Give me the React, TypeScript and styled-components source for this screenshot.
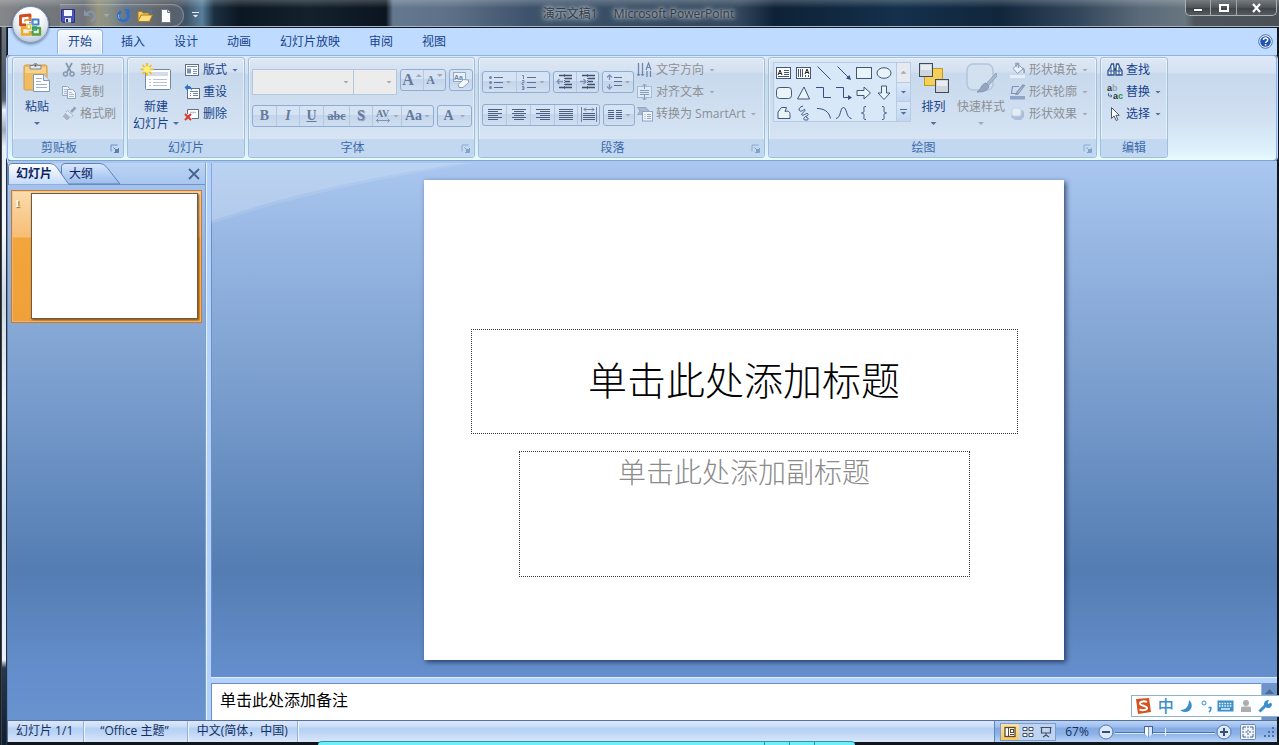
import React from 'react';
import styled, { createGlobalStyle, css } from 'styled-components';

const GlobalStyle = createGlobalStyle`
  *, *::before, *::after { box-sizing: border-box; }
  body { margin: 0; }
  body, button, input, select, textarea {
    font-family: "Open Sans", "Noto Sans CJK SC", sans-serif;
    font-size: 12px;
    line-height: 16px;
  }
  button { border: 0; padding: 0; background: none; color: inherit; cursor: default; white-space: nowrap; }
  svg { display: block; flex: none; }
`;

const ink = '#15428b';
const faded = '#8d8f93';

/* ---------- window frame ---------- */

const Frame = styled.div`
  position: relative;
  height: 100vh;
  min-height: 600px;
  display: flex;
  flex-direction: column;
  padding: 0 2px 3px 7px;
  overflow: hidden;
  background:
    linear-gradient(90deg, #1b1e24 0 1px, #3a3e46 1px 2px, transparent 2px 6px, #26303c 6px 7px, transparent 7px) left / 8px 100% no-repeat,
    linear-gradient(180deg, #7d8187 0, #4c5562 90px, #59626f 100px, #e9f1fb 110px, #9fa9b6 130px, #e9eef5 146px, #f4f7fd 230px, #cfd8e2 300px, #f1f6fd 400px, #d5e6fb 520px, #eaf2fd 660px, #26384d 668px, #0d1f30 100%) left / 8px 100% no-repeat,
    #11161d;
`;

const TitleBar = styled.header`
  display: grid;
  grid-template-columns: 1fr auto 1fr;
  align-items: start;
  height: 27px;
  flex: none;
  margin: 0 -2px 0 -7px;
  padding-right: 2px;
  border-bottom: 1px solid #a9b6c2;
  background:
    linear-gradient(180deg, rgba(255, 255, 255, 0.22) 0, rgba(255, 255, 255, 0) 8px),
    linear-gradient(90deg, #858789 0, #70757b 60px, #5f646b 84px, #8a8972 98px, #7c8578 108px, #5b6877 125px, #565b62 150px, #474e58 172px, #3f5466 186px, #587f9c 202px, #1c3040 214px, #0b1722 240px, #14212d 310px, #0a1520 386px, #64788f 393px, #5d7087 450px, #3d536b 530px, #31465c 740px, #0d2236 775px, #14304c 900px, #10263b 1000px, #34485d 1080px, #5a6a79 1140px, #68757f 1185px, #4d545b 1195px, #4a5056 100%);
`;

const QuickAccess = styled.div`
  display: flex;
  align-items: center;
  gap: 7px;
  height: 23px;
  margin-top: 4px;
  padding-left: 60px;
`;

const QuickPill = styled.div`
  display: flex;
  align-items: center;
  gap: 7px;
  height: 23px;
  width: 124px;
  border: 1px solid rgba(200, 210, 220, 0.35);
  border-left: 0;
  border-radius: 0 12px 12px 0;
  background: rgba(255, 255, 255, 0.1);
`;

const QuickButton = styled.button<{ $w?: number }>`
  width: ${(p) => p.$w ?? 16}px;
  height: 16px;
  display: flex;
  align-items: center;
  justify-content: center;
`;

const Title = styled.h1`
  margin: 5px 0 0;
  display: flex;
  gap: 16px;
  font-size: 12px;
  line-height: 18px;
  font-weight: 400;
  color: #343b43;
  text-shadow: 0 0 3px #a9b3bd, 0 0 5px #a9b3bd, 0 0 7px #9aa6b2, 0 0 9px #8d9aa8;
`;

const Controls = styled.div`
  justify-self: end;
  display: flex;
  height: 16px;
  border: 1px solid #aab0b6;
  border-top: 0;
  border-radius: 0 0 5px 5px;
  overflow: hidden;
  background: linear-gradient(180deg, #767b80, #4f5459 50%, #3e4348 52%, #565b60);
`;

const ControlButton = styled.button<{ $w: number }>`
  width: ${(p) => p.$w}px;
  display: flex;
  align-items: center;
  justify-content: center;
  & + & { border-left: 1px solid #a2a7ac; }
`;

const OfficeButton = styled.button`
  position: absolute;
  left: 12px;
  top: 6px;
  width: 37px;
  height: 37px;
  border-radius: 50%;
  display: flex;
  align-items: center;
  justify-content: center;
  border: 1px solid #7f93b2;
  background: radial-gradient(circle at 50% 25%, #ffffff 0 30%, #dfe5ee 60%, #b9c6da 85%, #f1f6fc 100%);
  box-shadow: 0 1px 3px rgba(20, 40, 80, 0.6);
`;

/* ---------- tabs ---------- */

const TabRow = styled.nav`
  flex: none;
  display: flex;
  align-items: flex-end;
  height: 28px;
  gap: 7px;
  padding: 0 4px 0 49px;
  border-top: 1px solid #0d1a2c;
  border-left: 1px solid #0d1a2c;
  background: #bfdbff;
  color: ${ink};
`;

const Tab = styled.button<{ $on?: boolean }>`
  height: 26px;
  padding: 0 10px 2px;
  border-radius: 4px 4px 0 0;
  border: 1px solid transparent;
  border-bottom: 0;
  ${(p) =>
    p.$on &&
    css`
      border-color: #8db2e3;
      background: linear-gradient(180deg, #f7fbff, #e6eef9 50%, #dfe9f6);
      box-shadow: inset 0 0 0 1px #fff;
    `}
`;

const HelpButton = styled.button`
  margin: 0 0 6px auto;
`;

/* ---------- ribbon ---------- */

const Ribbon = styled.section`
  flex: none;
  display: flex;
  gap: 3px;
  height: 106px;
  padding: 1px 4px 2px 4px;
  border: 1px solid #8db2e3;
  border-bottom-color: #7ea6c8;
  border-radius: 4px;
  background: linear-gradient(180deg, #dfe9f7 0, #d3e1f2 17px, #c7d8ec 18px, #d0dff1 60px, #dff1fc 96px, #e8fdff 100%);
  box-shadow: 0 0 0 1px #bfdbff;
`;

const Group = styled.div<{ $w: number }>`
  width: ${(p) => p.$w}px;
  flex: none;
  display: flex;
  flex-direction: column;
  border: 1px solid #9fc0da;
  border-radius: 3px;
  box-shadow: inset 0 0 0 1px rgba(255, 255, 255, 0.45);
  background: linear-gradient(180deg, #dee8f5 0, #d4e0f0 14px, #c8d9ed 15px, #d5e3f3 78px, #e0ebf8 100%);
`;

const GroupBody = styled.div<{ $left?: number }>`
  flex: 1;
  display: flex;
  padding-left: ${(p) => p.$left ?? 3}px;
`;

const GroupFooter = styled.div`
  display: flex;
  align-items: center;
  height: 18px;
  border-radius: 0 0 3px 3px;
  background: #c1d8f0;
  color: #3e6aaa;
`;

const GroupName = styled.h2`
  flex: 1;
  margin: 0;
  font-size: 12px;
  line-height: 16px;
  font-weight: 400;
  text-align: center;
`;

const Launcher = styled.button<{ $off?: boolean }>`
  width: 18px;
  height: 16px;
  display: flex;
  align-items: center;
  justify-content: center;
  opacity: ${(p) => (p.$off ? 0.6 : 1)};
`;

const BigButton = styled.button<{ $w: number; $off?: boolean }>`
  width: ${(p) => p.$w}px;
  flex: none;
  display: flex;
  flex-direction: column;
  align-items: center;
  padding-top: 4px;
  color: ${(p) => (p.$off ? faded : ink)};
`;

const BigIcon = styled.span`
  height: 36px;
  display: flex;
`;

const BigLine = styled.span`
  display: flex;
  align-items: center;
  gap: 4px;
  height: 17px;
`;

const Column = styled.div<{ $left?: number }>`
  display: flex;
  flex-direction: column;
  align-items: flex-start;
  padding-top: 1px;
  margin-left: ${(p) => p.$left ?? 0}px;
`;

const SmallButton = styled.button<{ $off?: boolean }>`
  display: flex;
  align-items: center;
  gap: 3px;
  height: 22px;
  color: ${(p) => (p.$off ? faded : ink)};
`;

const Caret = styled.span<{ $off?: boolean; $gap?: number; $up?: boolean; $raised?: boolean }>`
  width: 6px;
  height: 3px;
  flex: none;
  margin-left: ${(p) => p.$gap ?? 0}px;
  ${(p) => p.$raised && 'align-self: flex-start; margin-top: 4px;'}
  background: ${(p) => (p.$off ? '#a3a9b3' : '#4f6f9f')};
  clip-path: ${(p) => (p.$up ? 'polygon(50% 0, 100% 100%, 0 100%)' : 'polygon(0 0, 100% 0, 50% 100%)')};
`;

const Rows = styled.div<{ $gap: number; $top: number }>`
  display: flex;
  flex-direction: column;
  gap: ${(p) => p.$gap}px;
  padding-top: ${(p) => p.$top}px;
`;

const Row = styled.div`
  display: flex;
  gap: 3px;
`;

const Combos = styled.div`
  display: flex;
`;

const Combo = styled.select<{ $w: number }>`
  appearance: none;
  width: ${(p) => p.$w}px;
  height: 26px;
  border: 1px solid #b3c6de;
  border-radius: 0;
  padding: 0 12px 0 4px;
  background: #ececec;
  opacity: 1;
`;

const ComboWrap = styled.label`
  display: flex;
  align-items: center;
  & + & { margin-left: -1px; }
  & > span { margin-left: -11px; margin-right: 5px; }
`;

const Segment = styled.div`
  display: flex;
  height: 22px;
  border: 1px solid #8fadd1;
  border-radius: 3px;
  background: linear-gradient(180deg, #d5e3f4 0 45%, #c3d5eb 46%, #cfdff1);
`;

const SegmentButton = styled.button<{ $w: number }>`
  width: ${(p) => p.$w}px;
  display: flex;
  align-items: center;
  justify-content: center;
  gap: 2px;
  color: #667b9c;
  & + & { border-left: 1px solid #b4c8e1; }
`;

const Glyph = styled.span<{ $bold?: boolean; $italic?: boolean; $line?: string; $size?: number; $shadow?: boolean }>`
  font-family: "Liberation Serif", serif;
  font-size: ${(p) => p.$size ?? 14}px;
  font-weight: ${(p) => (p.$bold ? 700 : 400)};
  font-style: ${(p) => (p.$italic ? 'italic' : 'normal')};
  text-decoration: ${(p) => p.$line ?? 'none'};
  text-shadow: ${(p) => (p.$shadow ? '1px 1px 1px #7c90ad' : 'none')};
`;

const Gallery = styled.div`
  display: flex;
  height: 60px;
  margin-top: 4px;
  border: 1px solid #b5cbe6;
  background: #d9e8f8;
`;

const GalleryGrid = styled.div`
  display: grid;
  grid-template-columns: repeat(6, 20px);
  grid-template-rows: repeat(3, 20px);
`;

const GalleryItem = styled.button`
  display: flex;
  align-items: center;
  justify-content: center;
`;

const GalleryScroll = styled.div`
  width: 14px;
  margin-left: 2px;
  display: flex;
  flex-direction: column;
  border-left: 1px solid #b5cbe6;
`;

const ScrollButton = styled.button<{ $off?: boolean }>`
  flex: 1;
  display: flex;
  flex-direction: column;
  gap: 2px;
  align-items: center;
  justify-content: center;
  background: ${(p) => (p.$off ? '#e6eaf0' : 'linear-gradient(180deg, #dbe8f8, #c2d6ef)')};
  & + & { border-top: 1px solid #b5cbe6; }
`;

const Bar = styled.i`
  width: 7px;
  height: 1px;
  background: #4f6f9f;
`;

/* ---------- work area ---------- */

const Workspace = styled.main`
  flex: 1;
  min-height: 0;
  display: flex;
  padding-top: 2px;
  background: linear-gradient(180deg, #a9c7f0 0, #9cbbe6 60px, #547db3 410px, #648ecb 510px, #6993cf 100%);
`;

const OutlinePane = styled.aside`
  width: 199px;
  flex: none;
  border-left: 1px solid #5f82b5;
  border-right: 1px solid #7d9fce;
`;

const OutlineTabs = styled.div`
  position: relative;
  display: flex;
  align-items: center;
  height: 22px;
  border-bottom: 1px solid #6f94c4;
  background: linear-gradient(180deg, #bcd4f4, #a9c6ee);
  color: #0d2260;
`;

const TabShapes = styled.svg`
  position: absolute;
  left: 0;
  top: 0;
`;

const OutlineTab = styled.button<{ $w: number; $on?: boolean }>`
  position: relative;
  width: ${(p) => p.$w}px;
  height: 20px;
  padding-left: 8px;
  text-align: left;
  font-weight: ${(p) => (p.$on ? 600 : 400)};
`;

const PaneClose = styled.button`
  margin: 0 5px 0 auto;
`;

const ThumbCard = styled.button`
  display: flex;
  width: 191px;
  height: 133px;
  margin: 5px 0 0 3px;
  padding: 2px 3px 3px 0;
  border: 1px solid #c97a35;
  outline: 1px solid rgba(235, 190, 140, 0.7);
  outline-offset: -2px;
  background: linear-gradient(180deg, #fbdcae 0, #f6bd74 46px, #f2a53b 47px, #f0a038 100%);
`;

const ThumbNumber = styled.span`
  width: 19px;
  padding: 3px 11px 0 0;
  text-align: right;
  font: 700 11px/14px "Liberation Serif", serif;
  color: #fff;
  text-shadow: 1px 1px 1px #8f5a14;
`;

const ThumbPage = styled.span`
  flex: 1;
  height: 126px;
  border: 1px solid #6b5a42;
  background: #fff;
  box-shadow: 1px 1px 2px #7a4c10;
`;

const Splitter = styled.div`
  width: 5px;
  flex: none;
  background: #b2d2fb;
  border-left: 1px solid #e6f1ff;
`;

const Editor = styled.div`
  flex: 1;
  min-width: 0;
  display: flex;
  flex-direction: column;
`;

const Canvas = styled.div`
  position: relative;
  flex: 1;
  min-height: 0;
  display: flex;
  align-items: center;
  justify-content: center;
  box-shadow: inset 1px 0 0 #6b8fc2;
`;

const Swoosh = styled.svg`
  position: absolute;
  left: 0;
  top: 0;
`;

const Slide = styled.article`
  position: relative;
  width: 640px;
  height: 480px;
  display: flex;
  flex-direction: column;
  align-items: center;
  padding-top: 149px;
  gap: 17px;
  background: #fff;
  box-shadow: 2px 2px 5px rgba(20, 35, 70, 0.75);
`;

const Placeholder = styled.div<{ $w: number; $h: number; $size: number; $color: string; $middle?: boolean }>`
  width: ${(p) => p.$w}px;
  height: ${(p) => p.$h}px;
  display: flex;
  justify-content: center;
  align-items: ${(p) => (p.$middle ? 'center' : 'flex-start')};
  padding-bottom: 8px;
  border: 1px dotted #333;
  font-family: "Noto Sans CJK SC", sans-serif;
  font-weight: 300;
  font-size: ${(p) => p.$size}px;
  line-height: 38px;
  color: ${(p) => p.$color};
`;

const NotesArea = styled.div`
  flex: none;
  display: flex;
  height: 43px;
  padding-top: 5px;
  border-top: 1px solid #e2eeff;
  background: #b2d2fb;
`;

const Notes = styled.textarea`
  flex: 1;
  resize: none;
  border: solid #6b8fc2;
  border-width: 1px 0 0 1px;
  padding: 5px 8px;
  font-family: "Noto Sans CJK SC", sans-serif;
  font-size: 16px;
  line-height: 20px;
  background: #fff;
  outline: 0;
  &::placeholder { color: #000; opacity: 1; }
`;

const NotesScroll = styled.div`
  width: 16px;
  display: flex;
  justify-content: center;
  padding-top: 6px;
  border-left: 1px solid #9db9e0;
  background: #6f94c9;
`;

/* ---------- status bar ---------- */

const StatusBar = styled.footer`
  flex: none;
  display: flex;
  align-items: stretch;
  height: 22px;
  border-top: 1px solid #56729c;
  border-left: 1px solid #56729c;
  color: #16305e;
  background: linear-gradient(180deg, #dbe8fa 0, #c9dcf6 6px, #b4d0f4 7px, #bdd5f6 12px, #dbe7fa 100%);
`;

const StatusItem = styled.span<{ $l: number; $r: number }>`
  padding: 1px ${(p) => p.$r}px 0 ${(p) => p.$l}px;
  line-height: 18px;
  border-right: 1px solid #8fb0dc;
  box-shadow: 1px 0 0 #eef5ff;
  white-space: nowrap;
`;

const StatusRight = styled.div`
  margin-left: auto;
  display: flex;
  align-items: center;
  padding: 0 2px 0 5px;
  border-left: 1px solid #5f86bd;
  background: linear-gradient(180deg, #b9d2f4 0, #9dbfee 6px, #82aae4 7px, #8db2e8 13px, #bcd5f7 100%);
`;

const ViewGroup = styled.div`
  display: flex;
  height: 18px;
  border: 1px solid #7e9cc8;
  background: #bdd4f3;
`;

const ViewButton = styled.button<{ $on?: boolean }>`
  width: 18px;
  display: flex;
  align-items: center;
  justify-content: center;
  background: ${(p) => (p.$on ? 'linear-gradient(180deg, #fbe3a8, #f8c860)' : 'none')};
`;

const Percent = styled.button`
  width: 42px;
  text-align: center;
`;

const RoundButton = styled.button`
  display: flex;
`;

const Zoom = styled.input`
  appearance: none;
  width: 100px;
  height: 16px;
  margin: 0 1px;
  background:
    linear-gradient(#eaf3ff, #eaf3ff) 50px 4px / 1px 8px no-repeat,
    linear-gradient(#4f74a8, #4f74a8) 0 8px / 100% 1px no-repeat,
    linear-gradient(#dceafe, #dceafe) 0 9px / 100% 1px no-repeat;
  &::-webkit-slider-thumb {
    appearance: none;
    width: 9px;
    height: 12px;
    background: linear-gradient(90deg, #44618f 0 1px, #f8fbff 1px 4px, #7d9bc9 4px 5px, #dbe7f8 5px 8px, #44618f 8px);
    border-top: 1px solid #44618f;
    clip-path: polygon(0 0, 100% 0, 100% 65%, 50% 100%, 0 65%);
  }
`;

const FitButton = styled.button`
  margin: 0 6px 0 8px;
`;

const NextWindow = styled.div`
  position: absolute;
  left: 318px;
  bottom: 0;
  width: 42%;
  height: 4px;
  border-top: 1px solid #2b96a6;
  border-radius: 4px 4px 0 0;
  background: #6feefc;
  display: flex;
  justify-content: flex-end;
  gap: 24px;
  padding-right: 40px;
`;

const NextDivider = styled.i`
  width: 1px;
  background: #2b96a6;
`;

const ImeBar = styled.div`
  position: absolute;
  right: 0;
  bottom: 28px;
  width: 148px;
  height: 22px;
  display: flex;
  align-items: center;
  justify-content: space-between;
  padding: 0 6px 0 2px;
  border: 1px solid #8fb3c9;
  border-right: 0;
  background: #fdfeff;
`;

const ImeButton = styled.button`
  display: flex;
  color: #3d8fc9;
  font-size: 16px;
  font-weight: 500;
  line-height: 20px;
`;

/* ---------- icons ---------- */

type IconProps = { w?: number; h?: number; vb?: string; children: React.ReactNode; off?: boolean };
const Icon = ({ w = 16, h = 16, vb, children, off }: IconProps) => (
  <svg width={w} height={h} viewBox={vb ?? `0 0 ${w} ${h}`} fill="none" aria-hidden="true" opacity={off ? 0.55 : 1}>
    {children}
  </svg>
);

const OfficeLogo = () => (
  <Icon w={25} h={25}>
    <g strokeLinejoin="round">
      <path d="M12 9V3L2.500 4v9H8" stroke="#cf4a1c" strokeWidth="2.800" />
      <path d="M7 9.500V8h5V5" stroke="#f08a2a" strokeWidth="1.500" />
      <rect x="14.500" y="7.500" width="6" height="5" stroke="#3f82c8" strokeWidth="2" />
      <path d="M9 16H4v6.500h8V19" stroke="#f0a91c" strokeWidth="2.400" />
      <path d="M15 16h7v6.500h-7.500V19" stroke="#55a13a" strokeWidth="2.400" />
      <path d="M9 12.500h3.500V17H9z" stroke="#eac23a" strokeWidth="1.500" />
      <path d="M14.500 15v3h4v-3z" stroke="#2e9e6b" strokeWidth="1.400" />
      <path d="M11 10.500h4v3" stroke="#5aa0dc" strokeWidth="1.400" />
    </g>
  </Icon>
);

const SaveIcon = () => (
  <Icon w={14} h={14}>
    <path d="M.5 .5h13v13H2L.5 12z" fill="#4a53b8" stroke="#2c3488" />
    <rect x="3" y="1" width="8" height="6" fill="#f4f7ff" />
    <rect x="4" y="9" width="6" height="4.500" fill="#dfe3ee" />
    <rect x="5" y="10" width="2" height="3" fill="#2c3488" />
  </Icon>
);
const UndoIcon = () => (
  <Icon w={14} h={14}>
    <path d="M1 1v6h6z" fill="#8496af" />
    <path d="M4 4.500c3-3 8-2 8 2 0 3-2 5-4 5.500" stroke="#8496af" strokeWidth="2" />
  </Icon>
);
const RedoIcon = () => (
  <Icon w={14} h={14}>
    <path d="M5 2.500a5 5 0 1 0 5.500.5" stroke="#2f6fc6" strokeWidth="2.800" />
    <path d="M8 0h5.500v5.500z" fill="#2f6fc6" />
    <path d="M2.800 5.500a4.500 4.500 0 0 0 .5 4" stroke="#9cc4f2" />
  </Icon>
);
const FolderIcon = () => (
  <Icon w={16} h={14}>
    <path d="M1 12.500V2.500h4l1 1.500h6v2" fill="#f6cf62" stroke="#a97a1c" />
    <path d="M1 12.500 4 6h11.500l-3 6.500z" fill="#fbdc7e" stroke="#a97a1c" />
    <path d="M9 2c2-2 4-1 4.500 1M14.500 1v3h-3" stroke="#4a7ec0" />
  </Icon>
);
const PageIcon = () => (
  <Icon w={12} h={14}>
    <path d="M1.500.5h6l3 3v10h-9z" fill="#fff" stroke="#6b7a92" />
    <path d="M7.500.5v3h3" fill="#d6deea" stroke="#6b7a92" />
  </Icon>
);

const HelpIcon = () => (
  <Icon w={15} h={15}>
    <circle cx="7.500" cy="7.500" r="6.800" fill="#e9f1fd" stroke="#5273a8" />
    <circle cx="7.500" cy="7.500" r="5.300" fill="#1f55b5" />
    <path d="M5.500 6c0-2.600 4.200-2.600 4.200 0 0 1.600-2.100 1.400-2.100 3" stroke="#fff" strokeWidth="1.500" />
    <rect x="6.800" y="10" width="1.600" height="1.500" fill="#fff" />
  </Icon>
);

const PasteIcon = () => (
  <Icon w={28} h={32}>
    <rect x="1" y="3" width="23" height="25" rx="1.500" fill="#efbc62" stroke="#cf9c48" />
    <path d="M2 5h21v6H2z" fill="#f7d28c" />
    <path d="M7 3.500h3.500a2 2 0 0 1 4 0H18V7H7z" fill="#e3e7ec" stroke="#7b8490" />
    <rect x="11.500" y="2.500" width="2" height="2" fill="#3c434c" />
    <path d="M10.500 12.500h10l6 6v11h-16z" fill="#fff" stroke="#7f97bb" />
    <path d="M20.500 12.500v6h6" fill="#dbe6f5" stroke="#7f97bb" />
    <path d="M13 16.500h6M13 19.500h5M13 22.500h11M13 25.500h11" stroke="#9ab0d0" />
  </Icon>
);
const CutIcon = () => (
  <Icon>
    <path d="M5 1l5 9M11 1L6 10" stroke="#8797b0" strokeWidth="1.700" />
    <circle cx="4.500" cy="12" r="2" stroke="#8797b0" strokeWidth="1.500" />
    <circle cx="11" cy="12" r="2" stroke="#8797b0" strokeWidth="1.500" />
  </Icon>
);
const CopyIcon = () => (
  <Icon>
    <path d="M1.500 2.500h5l2 2v7h-7z" fill="#eef3fa" stroke="#93a5c1" />
    <path d="M3 5.500h4M3 7.500h3M3 9.500h3" stroke="#a9b8cf" />
    <path d="M6.500 5.500h5l3 3v6h-8z" fill="#f3f7fc" stroke="#93a5c1" />
    <path d="M8 8.500h3M8 10.500h5M8 12.500h5" stroke="#a9b8cf" />
  </Icon>
);
const BrushIcon = () => (
  <Icon>
    <path d="M14.500 1.500 10 6" stroke="#93a2ba" strokeWidth="2.500" />
    <path d="M6.500 4.500 12 9.500 10 11.500 4.500 6.500z" fill="#e4eaf2" stroke="#a3b0c5" />
    <path d="M4.500 6.500 10 11.500 6 15 1 10.500z" fill="#a6b5cb" stroke="#e6ecf4" strokeWidth=".8" />
  </Icon>
);
const NewSlideIcon = () => (
  <Icon w={32} h={30}>
    <rect x="5.500" y="7.500" width="25" height="20" rx="1" fill="#fff" stroke="#7088ae" />
    <rect x="8" y="10" width="20" height="4" fill="#d5dbe4" />
    <path d="M9 17.500h2M9 20.500h2M9 23.500h2M13 17.500h14M13 20.500h14M13 23.500h14" stroke="#b4c2d8" />
    <path d="M7 1v13M.5 7.500h13M2.500 3l9 9M11.500 3l-9 9" stroke="#f2bf12" strokeWidth="1.700" />
    <circle cx="7" cy="7.500" r="3.200" fill="#fff07a" />
  </Icon>
);
const LayoutIcon = () => (
  <Icon>
    <rect x="1.500" y="2.500" width="13" height="11" fill="#fff" stroke="#5f7189" />
    <path d="M3 4.500h10" stroke="#6f87ab" />
    <rect x="3" y="6.500" width="4" height="5" fill="#7c94b8" />
    <path d="M9 7.500h4M9 9.500h4M9 11.500h4" stroke="#7c94b8" />
  </Icon>
);
const ResetIcon = () => (
  <Icon>
    <rect x="3.500" y="4.500" width="12" height="10" fill="#fff" stroke="#5f7189" />
    <path d="M6 7.500h8M6 9.500h1M6 11.500h1M9 9.500h5M9 11.500h5" stroke="#6f87ab" />
    <path d="M4 0 .5 3.500 4 7V5c2-.5 3 0 4 2 0-3-1-5-4-5z" fill="#2f72c8" />
  </Icon>
);
const DeleteIcon = () => (
  <Icon>
    <path d="M3.500 8V3.500h11v9H8" fill="#fff" stroke="#5f7189" />
    <path d="M6 6.500h6" stroke="#b7c4d8" strokeWidth="1.500" />
    <path d="M1 8l6 6M7 8l-6 6" stroke="#d8392b" strokeWidth="2" />
  </Icon>
);

const EraserIcon = () => (
  <Icon w={18} h={17}>
    <rect x="1.500" y=".5" width="12" height="9" fill="#eaf1fa" stroke="#93a9c8" />
    <text x="2" y="7.500" fontSize="7" fontWeight="700" fill="#6e84a8" fontFamily="Liberation Sans, sans-serif">Aa</text>
    <path d="M6 12.500 11.500 7.500l5 .5v2.500L11 15.500H7z" fill="#f6f9fd" stroke="#8da2c0" />
  </Icon>
);
const LauncherIcon = () => (
  <Icon w={9} h={9}>
    <path d="M1 7.500V1h6.500" stroke="#6b8fc2" />
    <path d="M3.500 3.500l3 3M8.500 4v4.500H4" stroke="#5b7fb2" />
    <rect x="5" y="5" width="3" height="3" fill="#5b7fb2" />
  </Icon>
);

const lines = (ys: number[], x1: number, x2: number) => ys.map((y) => `M${x1} ${y}.5H${x2}`).join('');
const BulletsIcon = () => (
  <Icon>
    <path d="M6 3.500h9M6 8.500h9M6 13.500h9" stroke="#5c7191" />
    <g fill="#7288aa">
      <circle cx="2.500" cy="3.500" r="1.500" />
      <circle cx="2.500" cy="8.500" r="1.500" />
      <circle cx="2.500" cy="13.500" r="1.500" />
    </g>
  </Icon>
);
const NumbersIcon = () => (
  <Icon>
    <path d="M6 3.500h9M6 8.500h9M6 13.500h9" stroke="#5c7191" />
    <path d="M1 1.500h1.500V5M1 6.500h2v2H1v2h2M1 12.500h2v3H1M1 14h2" stroke="#7288aa" />
  </Icon>
);
const IndentIcon = ({ flip }: { flip?: boolean }) => (
  <Icon w={18}>
    <path d={lines([1, 13], 3, 16) + lines([4, 10], 9, 16) + 'M9 7.500h5'} stroke="#40526e" strokeWidth="1.300" />
    <path d="M8.500 0v15" stroke="#5c7191" strokeDasharray="1 1" />
    <path d={flip ? 'M1 7.500h6M4.500 5 7 7.500 4.500 10' : 'M7 7.500H1M3.500 5 1 7.500 3.500 10'} stroke="#7d93b8" strokeWidth="1.300" />
  </Icon>
);
const SpacingIcon = () => (
  <Icon w={17}>
    <path d="M3.500 1v5M1 3.500 3.500 1 6 3.500M3.500 10v5M1 12.500 3.500 15 6 12.500" stroke="#7d93b8" strokeWidth="1.300" />
    <path d="M8 3.500h8M8 7.500h8M8 11.500h8" stroke="#5c7191" />
  </Icon>
);
const AlignIcon = ({ kind }: { kind: 'left' | 'center' | 'right' | 'full' | 'spread' }) => {
  const ys = [2, 4, 6, 8, 10, 12];
  const d = ys
    .map((y, i) => {
      if (kind === 'full') return `M1 ${y}.5h14`;
      if (kind === 'spread') return i > 1 ? `M2 ${y}.5h12` : '';
      if (i % 2 === 0) return `M1 ${y}.5h14`;
      return kind === 'left' ? `M1 ${y}.5h10` : kind === 'right' ? `M5 ${y}.5h10` : `M3 ${y}.5h10`;
    })
    .join('');
  return (
    <Icon>
      <path d={d} stroke="#4b6080" />
      {kind === 'spread' && <path d="M.5 0v15M15.500 0v15M3 2.500h10M5 .5l-2 2 2 2M11 .5l2 2-2 2" stroke="#6b82a6" />}
    </Icon>
  );
};
const ColumnsIcon = () => (
  <Icon>
    <path d={lines([3, 5, 7, 9, 11], 1, 7) + lines([3, 5, 7, 9, 11], 9, 15)} stroke="#4b6080" />
  </Icon>
);
const DirectionIcon = () => (
  <Icon>
    <path d="M1.500 1v12M5.500 1v12M10 9v6M13.500 9v6" stroke="#6f87ab" strokeWidth="1.300" />
    <path d="M0 12l1.500 2L3 12M4 12l1.500 2L7 12" stroke="#6f87ab" />
    <path d="M9 8l2.500-7L14 8M10 5.500h3" stroke="#6f87ab" strokeWidth="1.200" />
  </Icon>
);
const AlignTextIcon = () => (
  <Icon off>
    <rect x=".5" y="2.500" width="14" height="11" fill="#eef4fb" stroke="#8ca3c4" />
    <path d="M3 6.500h9M3 8.500h9M3 10.500h9M7.500 5V0M5.500 2l2-2 2 2M7.500 11v5M5.500 14l2 2 2-2" stroke="#4f6a94" />
  </Icon>
);
const SmartArtIcon = () => (
  <Icon>
    <path d="M.5 1.500H9L12 5 9 8.500H.5L3 5z" fill="#a9b9d1" stroke="#97a9c4" />
    <rect x="5.500" y="5.500" width="10" height="9.500" fill="#f0f5fb" stroke="#8ca3c4" />
    <path d="M7.500 8.500h1M10 8.500h4M7.500 10.500h1M10 10.500h4M7.500 12.500h1M10 12.500h4" stroke="#8ca3c4" />
  </Icon>
);

const shapeStroke = '#44567a';
const shapes: [string, React.ReactNode][] = [
  ['文本框', <><rect x=".5" y="2.500" width="14" height="11" fill="#fff" stroke={shapeStroke} /><path d="M2 10l2-5 2 5M3 8.500h2" stroke="#222" /><path d="M8 5.500h5M8 7.500h5M8 9.500h5M2 11.500h11" stroke={shapeStroke} /></>],
  ['竖排文本框', <><rect x=".5" y="2.500" width="14" height="11" fill="#fff" stroke={shapeStroke} /><path d="M9 9l2-5 2 5M10 7.500h2" stroke="#222" /><path d="M2.500 4v8M4.500 4v8M6.500 4v8M9.500 10v2M12.500 10v2" stroke={shapeStroke} /></>],
  ['直线', <path d="M1.500 1.500l13 13" stroke="#34507c" />],
  ['箭头', <><path d="M1.500 1.500l11 11" stroke="#34507c" /><path d="M15 15l-5-1.500 3.500-3.500z" fill="#34507c" /></>],
  ['矩形', <rect x=".5" y="2.500" width="15" height="11" fill="#e8f4f8" stroke={shapeStroke} />],
  ['椭圆', <ellipse cx="8" cy="8" rx="7" ry="5.300" fill="#e8f4f8" stroke={shapeStroke} />],
  ['圆角矩形', <rect x=".5" y="2.500" width="15" height="11" rx="3" fill="#e8f4f8" stroke={shapeStroke} />],
  ['等腰三角形', <path d="M8 2l5.500 12h-12z" fill="#e8f4f8" stroke={shapeStroke} />],
  ['肘形连接符', <path d="M0 2.500h7.500v10H15" stroke="#34507c" />],
  ['肘形箭头连接符', <><path d="M0 2.500h7.500v10H13" stroke="#34507c" /><path d="M12 10l4 2.500-4 2.500z" fill="#34507c" /></>],
  ['右箭头', <path d="M1 5.500h7V2l6.500 6L8 14v-3.500H1z" fill="#e8f4f8" stroke={shapeStroke} />],
  ['下箭头', <path d="M5.500 1v7H2l6 6.500L14 8h-3.500V1z" fill="#e8f4f8" stroke={shapeStroke} />],
  ['任意多边形', <path d="M2 7 5.500 2.500 10.500 2.500 9 6.500c3-1 5 0 5 3v4H2z" fill="#e8f4f8" stroke={shapeStroke} />],
  ['自由曲线', <path d="M7 1C3 2 2 5 4 6s5-3 5-1-5 4-3 5 5-3 6-1-3 2-4 4 1 2 3 2 1-3-1-3" stroke="#34507c" />],
  ['弧形', <path d="M1 3.500c7 0 12 3 13.500 10" stroke="#34507c" />],
  ['曲线', <path d="M0 13.500C5 13 4 2.500 7.500 2.500S10 13 15.500 13.500" stroke="#34507c" />],
  ['左大括号', <path d="M10 1.500c-3 0-2 1-2 4 0 2-1 2.500-2.500 2.500C7 8 8 8.500 8 10.500c0 3-1 4 2 4" stroke="#34507c" />],
  ['右大括号', <path d="M6 1.500c3 0 2 1 2 4 0 2 1 2.500 2.500 2.500C9 8 8 8.500 8 10.500c0 3 1 4-2 4" stroke="#34507c" />],
];

const ArrangeIcon = () => (
  <Icon w={32} h={32}>
    <rect x="6.500" y="6.500" width="18" height="17" fill="#f5cf58" stroke="#c29a24" />
    <rect x="1.500" y="1.500" width="13" height="13" fill="#cfd5dd" stroke="#3f4a5c" />
    <path d="M3 3h10v5H3z" fill="#e9edf2" />
    <rect x="17.500" y="17.500" width="13" height="13" fill="#cfd5dd" stroke="#3f4a5c" />
    <path d="M19 19h10v5H19z" fill="#e9edf2" />
  </Icon>
);
const QuickStyleIcon = () => (
  <Icon w={32} h={32}>
    <rect x="2" y="2" width="26" height="26" rx="6" fill="#d3e0f0" stroke="#b3c5dd" strokeWidth="1.500" />
    <path d="M31 11 21 22l2 2 9-10z" fill="#a9b9cf" stroke="#8fa2bd" />
    <path d="M21 21l3 3c-1 5-6 6-12 6 4-2 4-8 9-9z" fill="#93a5c1" stroke="#8395b3" />
  </Icon>
);
const FillIcon = () => (
  <Icon off>
    <path d="M3 6.500 8 2l5 5-5.500 4.500z" fill="#fff" stroke="#55698c" />
    <path d="M6 5V1.500h2.500V6M12.500 6c2 1 2 3 1.500 5" stroke="#55698c" strokeWidth="1.500" />
    <rect x="0" y="13" width="15" height="3" fill="#fff" />
  </Icon>
);
const OutlineIcon = () => (
  <Icon>
    <path d="M9 2.500H2.500l-1 7H9M14.500 1.500 8 10l-2 .5 1-2.500 6-7z" stroke="#8093b1" strokeWidth="1.200" />
    <rect x="0" y="12" width="15" height="3.500" fill="#8fa5c8" />
  </Icon>
);
const EffectIcon = () => (
  <Icon off>
    <path d="M3 4h9l2 2v5l-3 3H5l-4-3z" fill="#8ea5c6" />
    <rect x="2" y="2" width="9" height="8" rx="2" fill="#f3f7fc" stroke="#b9c9df" />
  </Icon>
);
const FindIcon = () => (
  <Icon>
    <path d="M3 6l1.500-4h2L7 6v7H1V8.500zM13 6l-1.500-4h-2L9 6v7h6V8.500z" fill="#f0f5fc" stroke="#2e5590" strokeWidth="1.300" />
    <path d="M7 6h2v3H7z" fill="#2e5590" />
    <path d="M1.500 9h5M9.500 9h5M4 5v8M12 5v8" stroke="#2e5590" />
  </Icon>
);
const ReplaceIcon = () => (
  <Icon>
    <g fontFamily="Liberation Sans, sans-serif" fontSize="9" fontWeight="700">
      <text x="0" y="7" fill="#333">a</text>
      <text x="5" y="7" fill="#9aa3af">b</text>
      <text x="6" y="15" fill="#333">a</text>
      <text x="11" y="15" fill="#17974a">c</text>
    </g>
    <path d="M1.500 9v3H5M3.500 10.500 5 12l-1.500 1.500" stroke="#3a6cb4" />
  </Icon>
);
const SelectIcon = () => (
  <Icon>
    <path d="M4.500 1.500v11l2.600-2.600 2 4.600 1.800-.8-2-4.400h3.400z" fill="#fff" stroke="#4c5a70" />
  </Icon>
);

const Round = ({ plus }: { plus?: boolean }) => (
  <Icon w={16}>
    <circle cx="8" cy="8" r="7" fill="#dce8fa" stroke="#5878a8" />
    <path d={plus ? 'M4 8h8M8 4v8' : 'M4 8h8'} stroke="#33506f" strokeWidth="2" />
  </Icon>
);

/* ---------- page ---------- */

const RibbonGroup = ({
  name,
  w,
  left,
  launcher,
  children,
}: {
  name: string;
  w: number;
  left?: number;
  launcher?: 'on' | 'off';
  children: React.ReactNode;
}) => (
  <Group $w={w}>
    <GroupBody $left={left}>{children}</GroupBody>
    <GroupFooter>
      <GroupName>{name}</GroupName>
      {launcher && (
        <Launcher $off={launcher === 'off'} aria-label={`${name}选项`}>
          <LauncherIcon />
        </Launcher>
      )}
    </GroupFooter>
  </Group>
);

const Command = ({
  icon,
  label,
  off,
  caret,
}: {
  icon: React.ReactNode;
  label: string;
  off?: boolean;
  caret?: boolean;
}) => (
  <SmallButton $off={off}>
    {icon}
    {label}
    {caret && <Caret $off={off} $gap={2} />}
  </SmallButton>
);

const tabs = ['开始', '插入', '设计', '动画', '幻灯片放映', '审阅', '视图'];

export default function App() {
  return (
    <Frame>
      <GlobalStyle />
      <TitleBar>
        <QuickAccess>
          <QuickPill>
            <QuickButton aria-label="保存"><SaveIcon /></QuickButton>
            <QuickButton aria-label="撤消" $w={14}><UndoIcon /></QuickButton>
            <QuickButton aria-label="撤消列表" $w={5}><Caret $off /></QuickButton>
            <QuickButton aria-label="重复" $w={14}><RedoIcon /></QuickButton>
            <QuickButton aria-label="打开"><FolderIcon /></QuickButton>
            <QuickButton aria-label="新建" $w={12}><PageIcon /></QuickButton>
          </QuickPill>
          <QuickButton aria-label="自定义快速访问工具栏" $w={9}>
            <Icon w={7} h={7}><path d="M0 .5h7" stroke="#e3edf8" /><path d="M0 2.500h7L3.500 6z" fill="#e3edf8" stroke="#203a5c" strokeWidth=".5" /></Icon>
          </QuickButton>
        </QuickAccess>
        <Title>
          <span>演示文稿1</span>
          <span>Microsoft PowerPoint</span>
        </Title>
        <Controls>
          <ControlButton $w={24} aria-label="最小化"><Icon w={12} h={10}><rect x="1.500" y="5.500" width="9" height="3" fill="#fff" stroke="#3a3f45" /></Icon></ControlButton>
          <ControlButton $w={26} aria-label="最大化"><Icon w={12} h={10}><rect x="2" y="2" width="8" height="6" stroke="#fff" strokeWidth="2" /></Icon></ControlButton>
          <ControlButton $w={40} aria-label="关闭"><Icon w={12} h={10}><path d="M2 1l7 8M9 1L2 9" stroke="#fff" strokeWidth="2.200" /></Icon></ControlButton>
        </Controls>
      </TitleBar>

      <TabRow>
        {tabs.map((t, i) => (
          <Tab key={t} $on={i === 0}>{t}</Tab>
        ))}
        <HelpButton aria-label="帮助"><HelpIcon /></HelpButton>
      </TabRow>

      <Ribbon>
        <RibbonGroup name="剪贴板" w={112} left={0} launcher="on">
          <BigButton $w={48}>
            <BigIcon><PasteIcon /></BigIcon>
            <BigLine>粘贴</BigLine>
            <BigLine><Caret /></BigLine>
          </BigButton>
          <Column>
            <Command icon={<CutIcon />} label="剪切" off />
            <Command icon={<CopyIcon />} label="复制" off />
            <Command icon={<BrushIcon />} label="格式刷" off />
          </Column>
        </RibbonGroup>

        <RibbonGroup name="幻灯片" w={118} left={2}>
          <BigButton $w={52}>
            <BigIcon><NewSlideIcon /></BigIcon>
            <BigLine>新建</BigLine>
            <BigLine>幻灯片<Caret /></BigLine>
          </BigButton>
          <Column $left={2}>
            <Command icon={<LayoutIcon />} label="版式" caret />
            <Command icon={<ResetIcon />} label="重设" />
            <Command icon={<DeleteIcon />} label="删除" />
          </Column>
        </RibbonGroup>

        <RibbonGroup name="字体" w={227} launcher="off">
          <Rows $gap={10} $top={11}>
            <Row>
              <Combos>
                <ComboWrap>
                  <Combo $w={102} disabled aria-label="字体"><option /></Combo>
                  <Caret $off />
                </ComboWrap>
                <ComboWrap>
                  <Combo $w={44} disabled aria-label="字号"><option /></Combo>
                  <Caret $off />
                </ComboWrap>
              </Combos>
              <Segment>
                <SegmentButton $w={22} aria-label="增大字号"><Glyph $bold $size={16}>A</Glyph><Caret $up $off $raised /></SegmentButton>
                <SegmentButton $w={22} aria-label="减小字号"><Glyph $bold $size={12}>A</Glyph><Caret $off $raised /></SegmentButton>
              </Segment>
              <Segment>
                <SegmentButton $w={22} aria-label="清除格式"><EraserIcon /></SegmentButton>
              </Segment>
            </Row>
            <Row>
              <Segment>
                <SegmentButton $w={23} aria-label="加粗"><Glyph $bold>B</Glyph></SegmentButton>
                <SegmentButton $w={23} aria-label="倾斜"><Glyph $bold $italic>I</Glyph></SegmentButton>
                <SegmentButton $w={24} aria-label="下划线"><Glyph $bold $line="underline">U</Glyph></SegmentButton>
                <SegmentButton $w={26} aria-label="删除线"><Glyph $bold $line="line-through" $size={12}>abc</Glyph></SegmentButton>
                <SegmentButton $w={23} aria-label="阴影"><Glyph $bold $shadow>S</Glyph></SegmentButton>
                <SegmentButton $w={29} aria-label="字符间距">
                  <Icon w={16} h={16}>
                    <text x="1" y="9" fontSize="10" fontWeight="700" fill="#667b9c" fontFamily="Liberation Serif, serif">AV</text>
                    <path d="M1 12.500h14M3.500 10.500l-2 2 2 2M12.500 10.500l2 2-2 2" stroke="#7d93b8" />
                  </Icon>
                  <Caret $off />
                </SegmentButton>
                <SegmentButton $w={32} aria-label="更改大小写"><Glyph $bold>Aa</Glyph><Caret $off /></SegmentButton>
              </Segment>
              <Segment>
                <SegmentButton $w={33} aria-label="字体颜色"><Glyph $bold>A</Glyph><Caret $off $gap={4} /></SegmentButton>
              </Segment>
            </Row>
          </Rows>
        </RibbonGroup>

        <RibbonGroup name="段落" w={287} launcher="off">
          <Rows $gap={11} $top={13}>
            <Row>
              <Segment>
                <SegmentButton $w={33} aria-label="项目符号"><BulletsIcon /><Caret $off /></SegmentButton>
                <SegmentButton $w={33} aria-label="编号"><NumbersIcon /><Caret $off /></SegmentButton>
              </Segment>
              <Segment>
                <SegmentButton $w={22} aria-label="减少缩进"><IndentIcon /></SegmentButton>
                <SegmentButton $w={22} aria-label="增加缩进"><IndentIcon flip /></SegmentButton>
              </Segment>
              <Segment>
                <SegmentButton $w={30} aria-label="行距"><SpacingIcon /><Caret $off /></SegmentButton>
              </Segment>
            </Row>
            <Row>
              <Segment>
                <SegmentButton $w={23} aria-label="左对齐"><AlignIcon kind="left" /></SegmentButton>
                <SegmentButton $w={24} aria-label="居中"><AlignIcon kind="center" /></SegmentButton>
                <SegmentButton $w={24} aria-label="右对齐"><AlignIcon kind="right" /></SegmentButton>
                <SegmentButton $w={23} aria-label="两端对齐"><AlignIcon kind="full" /></SegmentButton>
                <SegmentButton $w={22} aria-label="分散对齐"><AlignIcon kind="spread" /></SegmentButton>
              </Segment>
              <Segment>
                <SegmentButton $w={30} aria-label="分栏"><ColumnsIcon /><Caret $off /></SegmentButton>
              </Segment>
            </Row>
          </Rows>
          <Column $left={2}>
            <Command icon={<DirectionIcon />} label="文字方向" off caret />
            <Command icon={<AlignTextIcon />} label="对齐文本" off caret />
            <Command icon={<SmartArtIcon />} label="转换为 SmartArt" off caret />
          </Column>
        </RibbonGroup>

        <RibbonGroup name="绘图" w={329} left={4} launcher="off">
          <Gallery>
            <GalleryGrid>
              {shapes.map(([name, art]) => (
                <GalleryItem key={name} aria-label={name}><Icon>{art}</Icon></GalleryItem>
              ))}
            </GalleryGrid>
            <GalleryScroll>
              <ScrollButton $off aria-label="上一行"><Caret $off $up /></ScrollButton>
              <ScrollButton aria-label="下一行"><Caret /></ScrollButton>
              <ScrollButton aria-label="其他形状"><Bar /><Caret /></ScrollButton>
            </GalleryScroll>
          </Gallery>
          <BigButton $w={45}>
            <BigIcon><ArrangeIcon /></BigIcon>
            <BigLine>排列</BigLine>
            <BigLine><Caret /></BigLine>
          </BigButton>
          <BigButton $w={50} $off>
            <BigIcon><QuickStyleIcon /></BigIcon>
            <BigLine>快速样式</BigLine>
            <BigLine><Caret $off /></BigLine>
          </BigButton>
          <Column $left={4}>
            <Command icon={<FillIcon />} label="形状填充" off caret />
            <Command icon={<OutlineIcon />} label="形状轮廓" off caret />
            <Command icon={<EffectIcon />} label="形状效果" off caret />
          </Column>
        </RibbonGroup>

        <RibbonGroup name="编辑" w={68} left={6}>
          <Column>
            <Command icon={<FindIcon />} label="查找" />
            <Command icon={<ReplaceIcon />} label="替换" caret />
            <Command icon={<SelectIcon />} label="选择" caret />
          </Column>
        </RibbonGroup>
      </Ribbon>

      <Workspace>
        <OutlinePane>
          <OutlineTabs>
            <TabShapes width="120" height="22" fill="none" aria-hidden="true">
              <defs>
                <linearGradient id="tabOn" x1="0" y1="0" x2="0" y2="1">
                  <stop offset="0" stopColor="#ffffff" />
                  <stop offset="1" stopColor="#c3dafa" />
                </linearGradient>
                <linearGradient id="tabOff" x1="0" y1="0" x2="0" y2="1">
                  <stop offset="0" stopColor="#dbe9fc" />
                  <stop offset=".5" stopColor="#b7d0f4" />
                  <stop offset="1" stopColor="#9dbdec" />
                </linearGradient>
              </defs>
              <path d="M53.500 21V3.500Q53.500.5 57 .5H92q4 0 7 4l13 16.500z" fill="url(#tabOff)" stroke="#5c83b8" />
              <path d="M.5 22V3.500Q.5.5 4 .5H42q4 0 7 4l9 13q2 3.500 4 4.500z" fill="url(#tabOn)" stroke="#5c83b8" />
            </TabShapes>
            <OutlineTab $w={53} $on>幻灯片</OutlineTab>
            <OutlineTab $w={50}>大纲</OutlineTab>
            <PaneClose aria-label="关闭窗格">
              <Icon w={12} h={12}><path d="M1 1l10 10M11 1L1 11" stroke="#46668f" strokeWidth="1.800" /></Icon>
            </PaneClose>
          </OutlineTabs>
          <ThumbCard aria-label="幻灯片 1">
            <ThumbNumber>1</ThumbNumber>
            <ThumbPage />
          </ThumbCard>
        </OutlinePane>
        <Splitter />
        <Editor>
          <Canvas>
            <Swoosh width="270" height="62" fill="none" aria-hidden="true">
              <path d="M0 0h255Q110 20 0 58z" fill="#fff" opacity=".14" />
              <path d="M0 0h265Q110 24 0 61z" fill="#fff" opacity=".1" />
            </Swoosh>
            <Slide>
              <Placeholder $w={547} $h={105} $size={39} $color="#000" $middle>单击此处添加标题</Placeholder>
              <Placeholder $w={451} $h={126} $size={28} $color="#8b8b8b">单击此处添加副标题</Placeholder>
            </Slide>
          </Canvas>
          <NotesArea>
            <Notes placeholder="单击此处添加备注" aria-label="备注" />
            <NotesScroll><Icon w={9} h={5}><path d="M0 5h9L4.500 0z" fill="#4a699b" /></Icon></NotesScroll>
          </NotesArea>
        </Editor>
      </Workspace>

      <StatusBar>
        <StatusItem $l={8} $r={10}>幻灯片 1/1</StatusItem>
        <StatusItem $l={16} $r={18}>“Office 主题”</StatusItem>
        <StatusItem $l={9} $r={9}>中文(简体，中国)</StatusItem>
        <StatusRight>
          <ViewGroup>
            <ViewButton $on aria-label="普通视图"><Icon w={12} h={12}><rect x="1" y="1.500" width="10" height="9" fill="#fff" stroke="#5a4a2e" strokeWidth="1.300" /><path d="M4.500 2v8M6 8.500h4" stroke="#5a4a2e" /><rect x="6.500" y="3.500" width="3" height="3" stroke="#5a4a2e" /></Icon></ViewButton>
            <ViewButton aria-label="幻灯片浏览"><Icon w={12} h={12}><path d="M1 1.500h4v3H1zM7 1.500h4v3H7zM1 7.500h4v3H1zM7 7.500h4v3H7z" fill="#fff" stroke="#454d5a" /></Icon></ViewButton>
            <ViewButton aria-label="幻灯片放映"><Icon w={12} h={12}><path d="M.5 1.500h11M1.500 2v5h9V2M6 7v3M3 11l3-2 3 2" fill="none" stroke="#454d5a" strokeWidth="1.200" /></Icon></ViewButton>
          </ViewGroup>
          <Percent>67%</Percent>
          <RoundButton aria-label="缩小"><Round /></RoundButton>
          <Zoom type="range" min={0} max={100} defaultValue={32} aria-label="显示比例" />
          <RoundButton aria-label="放大"><Round plus /></RoundButton>
          <FitButton aria-label="适应窗口">
            <Icon>
              <rect x=".5" y=".5" width="15" height="15" rx="1" fill="#eef4fd" stroke="#6d89b5" />
              <path d="M8 2v12M2 8h12" stroke="#4a5f84" strokeDasharray="2 1.500" />
              <path d="M3 6V3h3M10 3h3v3M13 10v3h-3M6 13H3v-3" stroke="#4a5f84" />
            </Icon>
          </FitButton>
          <Icon w={13} h={14}>
            <g fill="#50709f">
              <rect x="10" y="2" width="2" height="2" /><rect x="10" y="6" width="2" height="2" /><rect x="6" y="6" width="2" height="2" />
              <rect x="10" y="10" width="2" height="2" /><rect x="6" y="10" width="2" height="2" /><rect x="2" y="10" width="2" height="2" />
            </g>
          </Icon>
        </StatusRight>
      </StatusBar>

      <OfficeButton aria-label="Office 按钮"><OfficeLogo /></OfficeButton>
      <NextWindow>
        <NextDivider /><NextDivider /><NextDivider />
      </NextWindow>
      <ImeBar>
        <ImeButton aria-label="输入法">
          <Icon w={18} h={18}>
            <path d="M2 2 15 1l2 14-13 2z" fill="#d8501e" />
            <path d="M13 5C9 3.500 5.500 5 6 7s7 1.500 7 4-5 2.500-7.500 1.500" stroke="#fff" strokeWidth="2" />
          </Icon>
        </ImeButton>
        <ImeButton>中</ImeButton>
        <ImeButton aria-label="全半角"><Icon w={14} h={14}><path d="M9 1c5 4 3 12-4 12-2 0-4-1-4.500-2C6 11 9 7 9 1z" fill="#3d8fc9" /></Icon></ImeButton>
        <ImeButton aria-label="标点"><Icon w={12} h={14}><circle cx="4" cy="4" r="2" stroke="#3d8fc9" /><path d="M8.500 8.500h2.200c.5 2-.3 3.500-1.700 4.500" stroke="#3d8fc9" strokeWidth="1.600" /></Icon></ImeButton>
        <ImeButton aria-label="软键盘"><Icon w={17} h={12}><rect x=".5" y=".5" width="16" height="11" fill="#3d8fc9" /><path d="M2 3.500h13M2 6h13" stroke="#fff" strokeDasharray="1.500 1.200" strokeWidth="1.500" /><path d="M4 9h9" stroke="#fff" strokeWidth="1.300" /></Icon></ImeButton>
        <ImeButton aria-label="用户"><Icon w={12} h={14}><circle cx="6" cy="4" r="3" fill="#adadad" /><path d="M1 13V9q0-1.500 2-1.500h6q2 0 2 1.500v4z" fill="#adadad" /></Icon></ImeButton>
        <ImeButton aria-label="工具"><Icon w={15} h={14}><path d="M1.500 12.500 8 6" stroke="#3d8fc9" strokeWidth="3" /><path d="M13 3.500 10.500 5 9.500 4 11 1.200A4 4 0 1 0 14 5.500z" fill="#3d8fc9" /></Icon></ImeButton>
      </ImeBar>
    </Frame>
  );
}
